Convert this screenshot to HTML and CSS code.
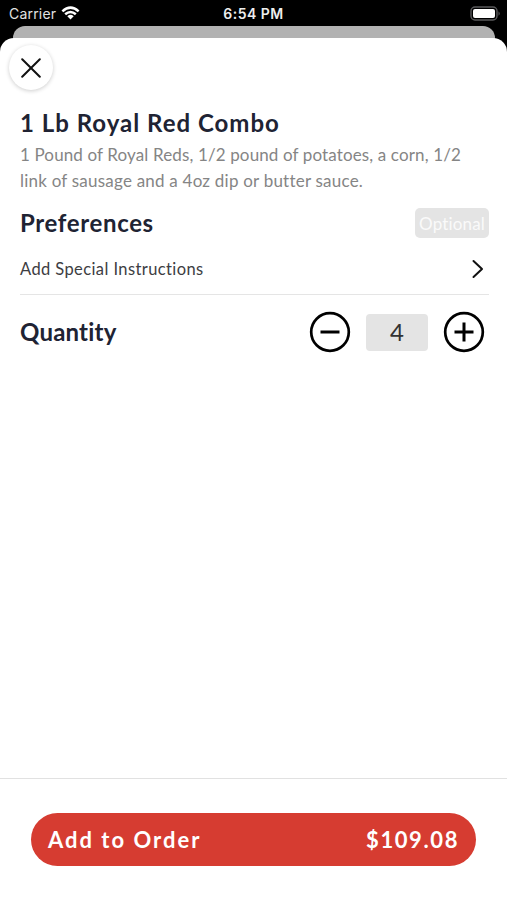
FILE: index.html
```html
<!DOCTYPE html>
<html lang="en">
<head>
<meta charset="utf-8">
<title>1 Lb Royal Red Combo</title>
<link rel="stylesheet" href="styles.css">
</head>
<body>
<header class="status">
  <div class="carrier"><span class="carrier-name">Carrier</span>
    <svg class="wifi" width="19" height="14" viewBox="0 0 20 15" fill="none" stroke="#fff" stroke-width="2.7"><path d="M1.3 5.7Q10-2.2 18.7 5.7M4.3 8.9Q10 3.9 15.7 8.9"/><path d="M6.6 11Q10 8 13.4 11L10 14.5Z" fill="#fff" stroke="none"/></svg>
  </div>
  <time class="time">6:54 PM</time>
  <svg class="battery" width="31" height="15" viewBox="0 0 31 15"><rect x="1" y="1" width="26" height="13" rx="4" fill="none" stroke="#59595b" stroke-width="1.4"/><rect x="3" y="3" width="22" height="9" rx="2" fill="#fff"/><path d="M28.5 5.2Q31 7.5 28.5 9.8Z" fill="#59595b"/></svg>
</header>
<div class="behind"></div>
<main class="sheet">
  <button class="close" aria-label="Close"><svg width="20" height="20" viewBox="0 0 20 20" fill="none" stroke="#111" stroke-width="2" stroke-linecap="round"><path d="M1.2 1.2 18.8 18.8M18.8 1.2 1.2 18.8"/></svg></button>
  <section class="content">
    <h1 class="heading title">1 Lb Royal Red Combo</h1>
    <p class="description"><span class="line first">1 Pound of Royal Reds, 1/2 pound of potatoes, a corn, 1/2</span> <span class="line second">link of sausage and a 4oz dip or butter sauce.</span></p>
    <div class="row preferences"><h2 class="heading pref-title">Preferences</h2><span class="optional">Optional</span></div>
    <div class="row instructions"><span class="instruction-text">Add Special Instructions</span>
      <svg width="12" height="20" viewBox="0 0 12 20" fill="none" stroke="#111" stroke-width="2" stroke-linecap="round" stroke-linejoin="round"><path d="M1.5 2 10 10 1.5 18"/></svg>
    </div>
    <div class="row quantity"><h2 class="heading quantity-title">Quantity</h2>
      <div class="stepper">
        <button class="step" aria-label="Decrease"><svg width="42" height="42" viewBox="0 0 42 42" fill="none" stroke="#000"><circle cx="21" cy="21" r="18.8" stroke-width="2.7"/><path d="M11.5 21h19" stroke-width="3"/></svg></button>
        <span class="count">4</span>
        <button class="step" aria-label="Increase"><svg width="42" height="42" viewBox="0 0 42 42" fill="none" stroke="#000"><circle cx="21" cy="21" r="18.8" stroke-width="2.7"/><path d="M11.5 21h19M21 11.5v19" stroke-width="3"/></svg></button>
      </div>
    </div>
  </section>
  <footer class="footer"><button class="order"><span class="order-label">Add to Order</span><span class="price">$109.08</span></button></footer>
</main>
</body>
</html>
```
FILE: styles.css
```css
* { box-sizing: border-box; }
body { margin: 0; height: 900px; overflow: hidden; background: #000; font-family: Lato, sans-serif; font-variant-ligatures: none; display: flex; flex-direction: column; }
button { border: 0; padding: 0; font-family: inherit; }
.status { height: 26px; flex: none; display: grid; grid-template-columns: 1fr auto 1fr; align-items: center; padding: 1px 6px 0 9px; color: #fff; font-family: Inter, sans-serif; }
.carrier { display: flex; align-items: center; gap: 5px; font-size: 14px; letter-spacing: .2px; color: #e2e2e2; }
.wifi { margin-top: -1px; }
.time { font-size: 14px; font-weight: 600; letter-spacing: .5px; color: #eee; margin-right: 3px; }
.battery { justify-self: end; }
.behind { height: 24px; flex: none; margin: 0 12px 0 13px; border-radius: 12px 12px 0 0; background: #b2b2b2; }
.sheet { flex: 1; margin-top: -12px; border-radius: 14px 14px 0 0; background: #fff; display: flex; flex-direction: column; }
.close { width: 44px; height: 45px; flex: none; margin: 7px 0 0 9px; border-radius: 50%; background: #fff; box-shadow: 0 1px 4px rgba(0,0,0,.2); display: grid; place-items: center; }
.content { flex: 1; padding: 15px 18px 0 20px; }
.heading { margin: 0; color: #202333; font-size: 24px; line-height: 36px; font-weight: 700; white-space: nowrap; }
.title { letter-spacing: 1px; }
.pref-title { letter-spacing: .65px; }
.quantity-title { letter-spacing: .2px; }
.description { margin: 0; color: #858585; font-size: 17px; line-height: 26px; position: relative; top: 1px; }
.line { display: block; white-space: nowrap; }
.first { letter-spacing: .13px; }
.second { letter-spacing: .22px; }
.row { display: flex; align-items: center; justify-content: space-between; }
.preferences { height: 46px; margin-top: 7px; }
.optional { width: 74px; height: 30px; border-radius: 5px; background: #e4e4e4; color: #fafafa; font-size: 17px; line-height: 31px; letter-spacing: .15px; text-align: center; }
.instructions { height: 49px; padding: 0 5px 2px 0; border-bottom: 1px solid #e5e5e5; font-size: 16.5px; letter-spacing: .4px; color: #3d3d42; }
.quantity { height: 74px; }
.stepper { display: flex; align-items: center; gap: 15px; padding-right: 4px; }
.step { width: 42px; height: 42px; background: none; }
.step svg { display: block; }
.count { width: 62px; height: 37px; border-radius: 4px; background: #e4e4e4; color: #333; font-size: 24px; line-height: 36px; text-align: center; }
.footer { height: 122px; border-top: 1px solid #e1e1e1; padding: 34px 31px 0; }
.order { width: 100%; height: 53px; border-radius: 27px; padding: 0 17px 1px; background: #d63c31; color: #fff; display: flex; align-items: center; justify-content: space-between; font-size: 22px; font-weight: 700; letter-spacing: 2px; }
.price { letter-spacing: 1.6px; }
```
